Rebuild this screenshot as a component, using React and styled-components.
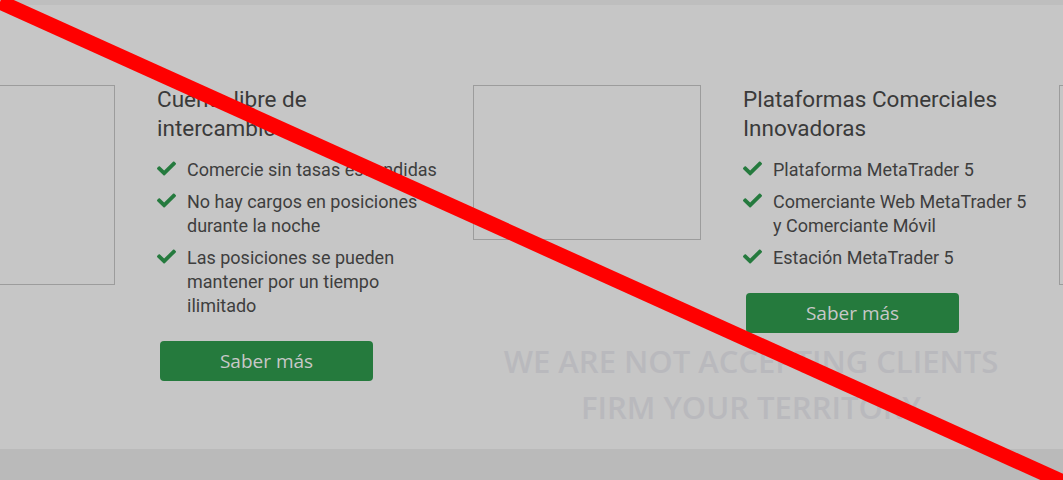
import React from 'react'
import styled, { createGlobalStyle } from 'styled-components'
import { FaCheck } from 'react-icons/fa'

const Global = createGlobalStyle`
  html, body {
    margin: 0;
    padding: 0;
    background: #c6c6c6;
    overflow: hidden;
  }
  * { box-sizing: border-box; }
`

const Page = styled.div`
  position: relative;
  width: 1063px;
  height: 480px;
  overflow: hidden;
  background: #c6c6c6;
  display: flex;
  flex-direction: column;
`

const TopStrip = styled.div`
  height: 5px;
  background: #bebebe;
  flex-shrink: 0;
`

const Section = styled.section`
  position: relative;
  height: 444px;
  flex-shrink: 0;
  overflow: hidden;
  padding-top: 80px;
`

const Track = styled.div`
  display: flex;
  gap: 32px;
  margin-left: -113px;
  width: max-content;
`

const Card = styled.div`
  display: flex;
  align-items: flex-start;
  gap: 42px;
`

const Picture = styled.div`
  width: 228px;
  height: ${p => p.$h}px;
  border: 1px solid #9c9c9c;
  flex-shrink: 0;
`

const Body = styled.div`
  width: 284px;
  display: flex;
  flex-direction: column;
`

const Title = styled.h3`
  margin: 0 0 15px;
  font-family: Roboto, "Liberation Sans", sans-serif;
  font-weight: 400;
  font-size: 22.5px;
  line-height: 29px;
  color: #3a3a3a;
`

const List = styled.ul`
  list-style: none;
  margin: 0;
  padding: 0;
  display: flex;
  flex-direction: column;
  gap: 8px;
`

const Item = styled.li`
  display: flex;
  gap: 11px;
  font-family: Roboto, "Liberation Sans", sans-serif;
  font-size: 18px;
  line-height: 24px;
  color: #3e3e3e;

  svg {
    flex-shrink: 0;
    width: 19px;
    height: 19px;
    margin-top: 1px;
    color: #257a3e;
  }
`

const Button = styled.a`
  display: flex;
  align-items: center;
  justify-content: center;
  margin: 23px 0 0 3px;
  width: 213px;
  height: 40px;
  border-radius: 4px;
  background: #257a3d;
  color: #c8c8c8;
  font-family: "Open Sans", "Liberation Sans", sans-serif;
  font-size: 19px;
  text-decoration: none;
`

const Watermark = styled.div`
  position: absolute;
  left: 471px;
  top: 333px;
  width: 560px;
  text-align: center;
  font-family: "Open Sans", "Liberation Sans", sans-serif;
  font-weight: 600;
  font-size: 31px;
  line-height: 46px;
  color: #b9b9bd;
  pointer-events: none;
`

const Footer = styled.div`
  flex: 1;
  background: #bababa;
`

const Cross = styled.svg`
  position: absolute;
  inset: 0;
  pointer-events: none;
`

const cards = [
  {
    img: 200,
    title: 'Cuenta libre de intercambios',
    items: [
      'Comercie sin tasas escondidas',
      'No hay cargos en posiciones durante la noche',
      'Las posiciones se pueden mantener por un tiempo ilimitado',
    ],
  },
  {
    img: 155,
    title: 'Plataformas Comerciales Innovadoras',
    items: [
      'Plataforma MetaTrader 5',
      'Comerciante Web MetaTrader 5 y Comerciante Móvil',
      'Estación MetaTrader 5',
    ],
  },
  {
    img: 200,
    title: 'Soporte',
    items: ['Atención al cliente'],
  },
]

export default function App() {
  return (
    <Page>
      <Global />
      <TopStrip />
      <Section>
        <Track>
          {cards.map((c, i) => (
            <Card key={i}>
              <Picture $h={c.img} />
              <Body>
                <Title>{c.title}</Title>
                <List>
                  {c.items.map(t => (
                    <Item key={t}>
                      <FaCheck />
                      <span>{t}</span>
                    </Item>
                  ))}
                </List>
                <Button href="#">Saber más</Button>
              </Body>
            </Card>
          ))}
        </Track>
        <Watermark>
          WE ARE NOT ACCEPTING CLIENTS
          <br />
          FIRM YOUR TERRITORY
        </Watermark>
      </Section>
      <Footer />
      <Cross width="1063" height="480" viewBox="0 0 1063 480">
        <line x1="0" y1="2" x2="1063" y2="482" stroke="#ff0000" strokeWidth="15" />
      </Cross>
    </Page>
  )
}
